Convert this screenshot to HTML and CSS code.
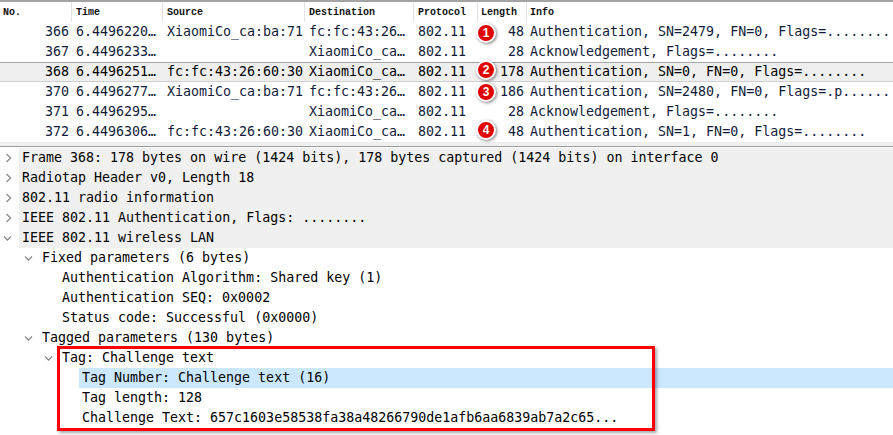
FILE: index.html
```html
<!DOCTYPE html>
<html>
<head>
<meta charset="utf-8">
<link rel="stylesheet" href="styles.css">
</head>
<body>
<div class="app">
  <div class="plist">
    <div class="phead">
      <div class="hc c-no">No.</div>
      <div class="hc c-time">Time</div>
      <div class="hc c-src">Source</div>
      <div class="hc c-dst">Destination</div>
      <div class="hc c-proto">Protocol</div>
      <div class="hc c-len">Length</div>
      <div class="hc c-info">Info</div>
    </div>
    <div class="prow">
      <div class="pc c-no num">366</div><div class="pc c-time">6.4496220…</div><div class="pc c-src">XiaomiCo_ca:ba:71</div><div class="pc c-dst">fc:fc:43:26…</div><div class="pc c-proto">802.11</div><div class="pc c-len num">48</div><div class="pc c-info">Authentication, SN=2479, FN=0, Flags=........</div>
    </div>
    <div class="prow">
      <div class="pc c-no num">367</div><div class="pc c-time">6.4496233…</div><div class="pc c-src"></div><div class="pc c-dst">XiaomiCo_ca…</div><div class="pc c-proto">802.11</div><div class="pc c-len num">28</div><div class="pc c-info">Acknowledgement, Flags=........</div>
    </div>
    <div class="prow sel">
      <div class="pc c-no num">368</div><div class="pc c-time">6.4496251…</div><div class="pc c-src">fc:fc:43:26:60:30</div><div class="pc c-dst">XiaomiCo_ca…</div><div class="pc c-proto">802.11</div><div class="pc c-len num">178</div><div class="pc c-info">Authentication, SN=0, FN=0, Flags=........</div>
    </div>
    <div class="prow">
      <div class="pc c-no num">370</div><div class="pc c-time">6.4496277…</div><div class="pc c-src">XiaomiCo_ca:ba:71</div><div class="pc c-dst">fc:fc:43:26…</div><div class="pc c-proto">802.11</div><div class="pc c-len num">186</div><div class="pc c-info">Authentication, SN=2480, FN=0, Flags=.p......</div>
    </div>
    <div class="prow">
      <div class="pc c-no num">371</div><div class="pc c-time">6.4496295…</div><div class="pc c-src"></div><div class="pc c-dst">XiaomiCo_ca…</div><div class="pc c-proto">802.11</div><div class="pc c-len num">28</div><div class="pc c-info">Acknowledgement, Flags=........</div>
    </div>
    <div class="prow">
      <div class="pc c-no num">372</div><div class="pc c-time">6.4496306…</div><div class="pc c-src">fc:fc:43:26:60:30</div><div class="pc c-dst">XiaomiCo_ca…</div><div class="pc c-proto">802.11</div><div class="pc c-len num">48</div><div class="pc c-info">Authentication, SN=1, FN=0, Flags=........</div>
    </div>
  </div>

  <div class="splitter"></div>

  <div class="tree">
    <div class="trow l0"><span class="chev"><svg width="19" height="20"><polyline points="6.5,6 10.5,10 6.5,14" /></svg></span><span class="lbl top">Frame 368: 178 bytes on wire (1424 bits), 178 bytes captured (1424 bits) on interface 0</span></div>
    <div class="trow l0"><span class="chev"><svg width="19" height="20"><polyline points="6.5,6 10.5,10 6.5,14" /></svg></span><span class="lbl top">Radiotap Header v0, Length 18</span></div>
    <div class="trow l0"><span class="chev"><svg width="19" height="20"><polyline points="6.5,6 10.5,10 6.5,14" /></svg></span><span class="lbl top">802.11 radio information</span></div>
    <div class="trow l0"><span class="chev"><svg width="19" height="20"><polyline points="6.5,6 10.5,10 6.5,14" /></svg></span><span class="lbl top">IEEE 802.11 Authentication, Flags: ........</span></div>
    <div class="trow l0"><span class="chev"><svg width="19" height="20"><polyline points="4,8.5 7.5,12 11,8.5" /></svg></span><span class="lbl top">IEEE 802.11 wireless LAN</span></div>
    <div class="trow l1"><span class="chev"><svg width="19" height="20"><polyline points="5,8.5 8.5,12 12,8.5" /></svg></span><span class="lbl">Fixed parameters (6 bytes)</span></div>
    <div class="trow l2"><span class="chev"></span><span class="lbl">Authentication Algorithm: Shared key (1)</span></div>
    <div class="trow l2"><span class="chev"></span><span class="lbl">Authentication SEQ: 0x0002</span></div>
    <div class="trow l2"><span class="chev"></span><span class="lbl">Status code: Successful (0x0000)</span></div>
    <div class="trow l1"><span class="chev"><svg width="19" height="20"><polyline points="5,8.5 8.5,12 12,8.5" /></svg></span><span class="lbl">Tagged parameters (130 bytes)</span></div>
    <div class="trow l2"><span class="chev"><svg width="19" height="20"><polyline points="5,8.5 8.5,12 12,8.5" /></svg></span><span class="lbl">Tag: Challenge text</span></div>
    <div class="trow l3"><span class="chev"></span><span class="lbl hl">Tag Number: Challenge text (16)</span></div>
    <div class="trow l3"><span class="chev"></span><span class="lbl">Tag length: 128</span></div>
    <div class="trow l3"><span class="chev"></span><span class="lbl">Challenge Text: 657c1603e58538fa38a48266790de1afb6aa6839ab7a2c65...</span></div>
  </div>

  <div class="badge b1">1</div>
  <div class="badge b2">2</div>
  <div class="badge b3">3</div>
  <div class="badge b4">4</div>
  <div class="redbox"></div>
</div>
</body>
</html>
```

FILE: styles.css
```css
html, body {
  margin: 0;
  padding: 0;
  background: #ffffff;
}
.app {
  position: relative;
  width: 893px;
  height: 435px;
  overflow: hidden;
  font-family: "DejaVu Sans Mono", "Liberation Mono", monospace;
  font-size: 13.3px;
  color: #000;
}
.plist {
  display: flex;
  flex-direction: column;
}
.phead {
  display: grid;
  grid-template-columns: 72px 91px 142px 109px 64px 49px 1fr;
  height: 20px;
  border-top: 2px solid #a3a3a3;
  font-family: "Liberation Mono", monospace;
  font-size: 10px;
  font-weight: bold;
  color: #111;
}
.hc {
  display: flex;
  align-items: center;
  padding-left: 4px;
  border-right: 1px solid #e3e3e3;
  white-space: nowrap;
  overflow: hidden;
}
.hc.c-no { padding-left: 3px; }
.hc.c-info { border-right: none; padding-left: 3px; }
.hc.c-len { padding-left: 3px; }
.prow {
  display: grid;
  grid-template-columns: 72px 91px 142px 109px 64px 49px 1fr;
  height: 20px;
  line-height: 20px;
  color: #121c3a;
  white-space: nowrap;
}
.prow.sel {
  background: #efefef;
  color: #000;
  box-shadow: inset 0 1px 0 #a6a6a6, inset 0 -1px 0 #cfcfcf;
}
.pc {
  overflow: hidden;
  white-space: nowrap;
  padding-left: 4px;
}
.pc.num {
  text-align: right;
  padding-left: 0;
  padding-right: 3px;
}
.pc.c-info { padding-left: 3px; }
.splitter {
  height: 4px;
  background: #f0f0f0;
  border-bottom: 1px solid #9c9c9c;
}
.tree {
  display: flex;
  flex-direction: column;
  padding-top: 1px;
}
.trow {
  display: flex;
  height: 20px;
  line-height: 20px;
  white-space: nowrap;
}
.trow.l1 { padding-left: 20px; }
.trow.l2 { padding-left: 40px; }
.trow.l3 { padding-left: 60px; }
.chev {
  flex: 0 0 19px;
  width: 19px;
  height: 20px;
}
.chev svg {
  display: block;
}
.chev polyline {
  fill: none;
  stroke: #8a8a8a;
  stroke-width: 1.3;
}
.lbl {
  flex: 1;
  padding-left: 3px;
  overflow: hidden;
}
.lbl.top {
  background: #f0f0f0;
}
.lbl.hl {
  background: #cce8ff;
}
.badge {
  position: absolute;
  left: 476px;
  width: 16px;
  height: 16px;
  border-radius: 50%;
  background: #e00000;
  border: 2px solid #ffffff;
  box-shadow: 1px 1px 3px rgba(0, 0, 0, 0.5);
  color: #fff;
  font-family: "Liberation Sans", Arial, sans-serif;
  font-weight: bold;
  font-size: 12px;
  line-height: 16px;
  text-align: center;
}
.b1 { top: 23px; }
.b2 { top: 60px; }
.b3 { top: 82px; }
.b4 { top: 120px; }
.redbox {
  position: absolute;
  left: 57px;
  top: 346px;
  width: 592px;
  height: 79px;
  border: 3px solid #ff0000;
  box-shadow: 2px 2px 3px rgba(0, 0, 0, 0.35);
}
```
